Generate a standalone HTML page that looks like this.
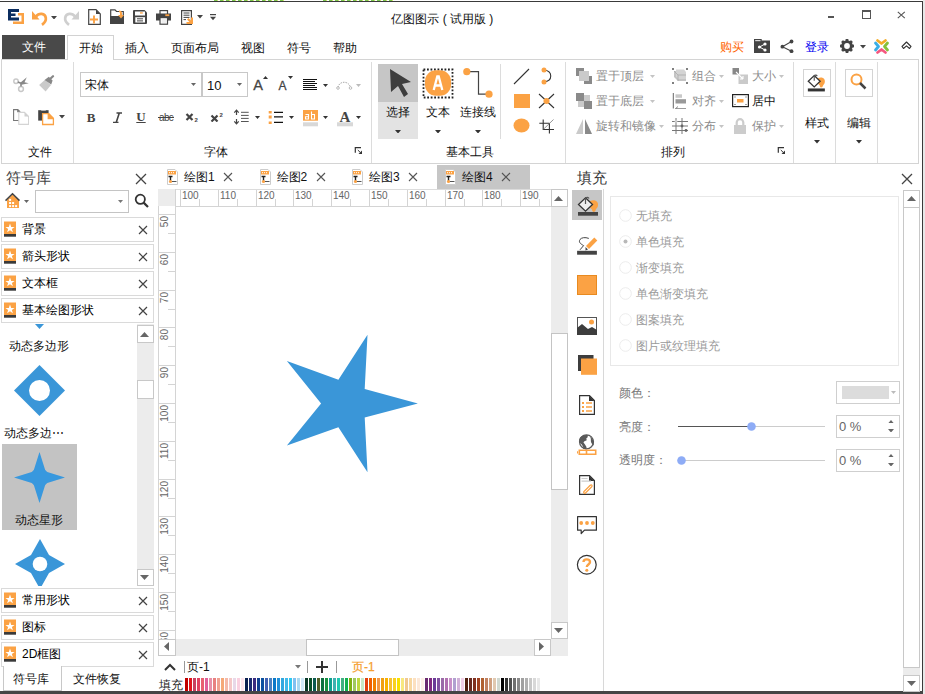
<!DOCTYPE html><html><head><meta charset="utf-8"><style>body{margin:0;width:925px;height:694px;position:relative;overflow:hidden;background:#fff;font-family:"Liberation Sans",sans-serif;}div,svg{box-sizing:border-box}</style></head><body>
<div style="position:absolute;left:0px;top:1px;width:923px;height:1px;background:#3a3a3a"></div>
<div style="position:absolute;left:214px;top:0px;width:70px;height:1px;background:repeating-linear-gradient(90deg,#7cc850 0 3px,#d8e070 3px 4px,#fff 4px 6px)"></div>
<div style="position:absolute;left:323px;top:0px;width:72px;height:1px;background:repeating-linear-gradient(90deg,#7cc850 0 3px,#d8e070 3px 4px,#fff 4px 6px)"></div>
<div style="position:absolute;left:922px;top:1px;width:1px;height:691px;background:#3a3a3a"></div>
<div style="position:absolute;left:0px;top:691px;width:923px;height:3px;background:#454545"></div>
<svg style="position:absolute;left:8px;top:9px;" width="17" height="16" viewBox="0 0 17 16"><path d="M0 0H11V3H3V4.5H7.5V7H3V8.5H11V11.5H0Z" fill="#0b2d5f"/><path d="M10 4H16V15H5V12.5H13.5V6.5H10Z" fill="#fba244"/></svg>
<svg style="position:absolute;left:31px;top:9px;" width="17" height="17" viewBox="0 0 17 17"><path d="M1 2L1 10.5H8.5Z" fill="#fba244"/><path d="M5 7.5C8 3.5 14 4 14.8 8.8C15.3 12 13.5 14 11 15.8" stroke="#fba244" stroke-width="2.7" fill="none"/></svg>
<svg style="position:absolute;left:50.5px;top:15.75px;" width="6" height="3.5" viewBox="0 0 6 3.5"><path d="M0 0H6L3.0 3.5Z" fill="#444"/></svg>
<svg style="position:absolute;left:63px;top:9px;" width="17" height="17" viewBox="0 0 17 17"><path d="M16 2L16 10.5H8.5Z" fill="#cfcfcf"/><path d="M12 7.5C9 3.5 3 4 2.2 8.8C1.7 12 3.5 14 6 15.8" stroke="#cfcfcf" stroke-width="2.7" fill="none"/></svg>
<svg style="position:absolute;left:88px;top:9px;" width="13" height="16" viewBox="0 0 13 16"><path d="M0.7 0.7H8L12.3 5V15.3H0.7Z" fill="#fff" stroke="#444" stroke-width="1.2"/><path d="M8 0.7V5H12.3Z" fill="#444"/><path d="M6 6.5V14.5M2 10.5H10" stroke="#fba244" stroke-width="1.9"/></svg>
<svg style="position:absolute;left:110px;top:9px;" width="15" height="15" viewBox="0 0 15 15"><path d="M0.7 0.9H5L6.5 2.5H13.3V14.3H0.7Z" fill="#fff" stroke="#444" stroke-width="1.2"/><rect x="0" y="7" width="14" height="8" fill="#444"/><path d="M9 1.5C11 1.5 12 2.5 12 4.5V6H14L11 9.5L8 6H10V4.5C10 3.5 9.5 3 9 3Z" fill="#fba244"/></svg>
<svg style="position:absolute;left:133px;top:10px;" width="14" height="14" viewBox="0 0 14 14"><path d="M0 1A1 1 0 0 1 1 0H11.5L14 2.5V13A1 1 0 0 1 13 14H1A1 1 0 0 1 0 13Z" fill="#444"/><rect x="2" y="1.5" width="10" height="4" fill="#fff"/><rect x="7" y="2.3" width="2.8" height="1.3" fill="#fba244"/><rect x="2.3" y="7.2" width="9.7" height="5.3" fill="#fff"/><path d="M4 8.8H10M4 10.9H10" stroke="#444"/></svg>
<svg style="position:absolute;left:155.5px;top:10px;" width="15" height="15" viewBox="0 0 15 15"><rect x="4" y="0.6" width="7.5" height="4" fill="#fff" stroke="#444" stroke-width="1.2"/><rect x="0" y="3.5" width="15" height="7" fill="#444"/><rect x="9.3" y="4.3" width="4" height="1.8" fill="#fba244"/><rect x="4" y="7.6" width="7.5" height="6.6" fill="#fff" stroke="#444" stroke-width="1.2"/><path d="M5.5 10H10M5.5 12H10" stroke="#ddd"/></svg>
<svg style="position:absolute;left:181px;top:10px;" width="12" height="15" viewBox="0 0 12 15"><path d="M0.6 0.6H10.4V14.4H0.6Z" fill="#fff" stroke="#444" stroke-width="1.2"/><path d="M2.5 3H8.5M2.5 5.2H8.5M2.5 7.4H8.5M2.5 9.6H5" stroke="#444" stroke-width="1"/><path d="M6 9.5L7.5 8L10 10.5V7.5H12V14H5.5V12H8.5Z" fill="#fba244"/></svg>
<svg style="position:absolute;left:197.0px;top:15.25px;" width="6" height="3.5" viewBox="0 0 6 3.5"><path d="M0 0H6L3.0 3.5Z" fill="#444"/></svg>
<svg style="position:absolute;left:210px;top:14px;" width="6" height="7" viewBox="0 0 6 7"><rect x="0" y="0" width="6" height="1.2" fill="#444"/><path d="M0 2.8H6L3 6.3Z" fill="#444"/></svg>
<div style="position:absolute;left:342.3px;top:10.5px;width:200px;text-align:center;font-size:12px;line-height:16px;color:#111;white-space:nowrap;">亿图图示 ( 试用版 )</div>
<div style="position:absolute;left:828px;top:16px;width:6px;height:2px;background:#555"></div>
<div style="position:absolute;left:862px;top:10px;width:9px;height:9px;border:1px solid #555;border-top:2px solid #555"></div>
<svg style="position:absolute;left:896.5px;top:10.5px;" width="9" height="8" viewBox="0 0 9 8"><path d="M0.8 0.8L7.8 7.2M7.8 0.8L0.8 7.2" stroke="#555" stroke-width="1.1"/></svg>
<div style="position:absolute;left:2px;top:35px;width:63px;height:24px;background:#494949"></div>
<div style="position:absolute;left:-66.5px;top:39.0px;width:200px;text-align:center;font-size:12px;line-height:16px;color:#fff;white-space:nowrap;">文件</div>
<div style="position:absolute;left:67px;top:35px;width:47px;height:25px;background:#fff;border:1px solid #d2d2d2;border-bottom:none;z-index:2"></div>
<div style="position:absolute;left:-9.5px;top:39.5px;width:200px;text-align:center;font-size:12px;line-height:16px;color:#111;white-space:nowrap;z-index:3">开始</div>
<div style="position:absolute;left:37px;top:39.5px;width:200px;text-align:center;font-size:12px;line-height:16px;color:#111;white-space:nowrap;">插入</div>
<div style="position:absolute;left:94.5px;top:39.5px;width:200px;text-align:center;font-size:12px;line-height:16px;color:#111;white-space:nowrap;">页面布局</div>
<div style="position:absolute;left:152.5px;top:39.5px;width:200px;text-align:center;font-size:12px;line-height:16px;color:#111;white-space:nowrap;">视图</div>
<div style="position:absolute;left:198.5px;top:39.5px;width:200px;text-align:center;font-size:12px;line-height:16px;color:#111;white-space:nowrap;">符号</div>
<div style="position:absolute;left:244.60000000000002px;top:39.5px;width:200px;text-align:center;font-size:12px;line-height:16px;color:#111;white-space:nowrap;">帮助</div>
<div style="position:absolute;left:632px;top:38.5px;width:200px;text-align:center;font-size:12px;line-height:16px;color:#ff6400;white-space:nowrap;">购买</div>
<svg style="position:absolute;left:754px;top:39px;" width="16" height="14" viewBox="0 0 16 14"><rect x="0" y="1.5" width="16" height="12.5" fill="#444"/><rect x="0.6" y="0.6" width="6.5" height="2.2" fill="#fff" stroke="#444" stroke-width="1.2"/><circle cx="11" cy="5" r="1.6" fill="#fff"/><circle cx="5.5" cy="8" r="1.6" fill="#fff"/><circle cx="11" cy="11" r="1.6" fill="#fff"/><path d="M11 5L5.5 8L11 11" stroke="#fff" fill="none"/></svg>
<svg style="position:absolute;left:780px;top:39px;" width="14" height="14" viewBox="0 0 14 14"><circle cx="11.5" cy="2.5" r="1.9" fill="#444"/><circle cx="2.4" cy="7.7" r="1.9" fill="#444"/><circle cx="11.5" cy="12.2" r="1.9" fill="#444"/><path d="M11.5 2.5L2.4 7.7L11.5 12.2" stroke="#444" stroke-width="1.1" fill="none"/></svg>
<div style="position:absolute;left:717px;top:38.5px;width:200px;text-align:center;font-size:12px;line-height:16px;color:#0000f0;white-space:nowrap;">登录</div>
<svg style="position:absolute;left:839px;top:38px;" width="16" height="16" viewBox="0 0 16 16"><g fill="#444"><circle cx="8" cy="8" r="5.8"/><rect x="6.6" y="1" width="2.8" height="3" rx="0.6" transform="rotate(0 8 8)"/><rect x="6.6" y="1" width="2.8" height="3" rx="0.6" transform="rotate(45 8 8)"/><rect x="6.6" y="1" width="2.8" height="3" rx="0.6" transform="rotate(90 8 8)"/><rect x="6.6" y="1" width="2.8" height="3" rx="0.6" transform="rotate(135 8 8)"/><rect x="6.6" y="1" width="2.8" height="3" rx="0.6" transform="rotate(180 8 8)"/><rect x="6.6" y="1" width="2.8" height="3" rx="0.6" transform="rotate(225 8 8)"/><rect x="6.6" y="1" width="2.8" height="3" rx="0.6" transform="rotate(270 8 8)"/><rect x="6.6" y="1" width="2.8" height="3" rx="0.6" transform="rotate(315 8 8)"/></g><circle cx="8" cy="8" r="2.9" fill="#fff"/></svg>
<svg style="position:absolute;left:859.5px;top:45.25px;" width="6" height="3.5" viewBox="0 0 6 3.5"><path d="M0 0H6L3.0 3.5Z" fill="#444"/></svg>
<svg style="position:absolute;left:873px;top:38px;" width="17" height="17" viewBox="0 0 17 17"><g fill="none" stroke-width="2.8" stroke-linecap="round" stroke-linejoin="round"><path d="M4.5 2.5L8.5 5.5L12.5 2.5" stroke="#f4ac27"/><path d="M2.5 5L5.5 8.5L2.5 12" stroke="#3aaee6"/><path d="M14.5 5L11.5 8.5L14.5 12" stroke="#86c13b"/><path d="M4.5 14.5L8.5 11.5L12.5 14.5" stroke="#f4577f"/></g></svg>
<svg style="position:absolute;left:901px;top:41px;" width="11" height="9" viewBox="0 0 11 9"><path d="M1 5.5L5.5 1L10 5.5L8.5 7.5L5.5 4.8L2.5 7.5Z" fill="#fff" stroke="#333" stroke-width="1.1" stroke-linejoin="round"/></svg>
<div style="position:absolute;left:1px;top:59px;width:918px;height:105px;border:1px solid #d4d4d4;background:#fff;z-index:1"></div>
<div style="position:absolute;left:0;top:0;width:925px;height:694px;z-index:4">
<div style="position:absolute;left:73px;top:62px;width:1px;height:101px;background:#dcdcdc"></div>
<div style="position:absolute;left:371px;top:62px;width:1px;height:101px;background:#dcdcdc"></div>
<div style="position:absolute;left:565px;top:62px;width:1px;height:101px;background:#dcdcdc"></div>
<div style="position:absolute;left:793px;top:62px;width:1px;height:101px;background:#dcdcdc"></div>
<div style="position:absolute;left:835px;top:62px;width:1px;height:101px;background:#dcdcdc"></div>
<div style="position:absolute;left:877px;top:62px;width:1px;height:101px;background:#dcdcdc"></div>
<div style="position:absolute;left:-60px;top:143.5px;width:200px;text-align:center;font-size:12px;line-height:16px;color:#111;white-space:nowrap;">文件</div>
<div style="position:absolute;left:116px;top:143.5px;width:200px;text-align:center;font-size:12px;line-height:16px;color:#111;white-space:nowrap;">字体</div>
<div style="position:absolute;left:370px;top:143.5px;width:200px;text-align:center;font-size:12px;line-height:16px;color:#111;white-space:nowrap;">基本工具</div>
<div style="position:absolute;left:573px;top:143.5px;width:200px;text-align:center;font-size:12px;line-height:16px;color:#111;white-space:nowrap;">排列</div>
<svg style="position:absolute;left:354px;top:146px;" width="9" height="9" viewBox="0 0 9 9"><path d="M1.3 6.8V1.7H7" stroke="#333" stroke-width="1.2" fill="none"/><path d="M3.8 4L6.5 6.7" stroke="#333" stroke-width="1"/><path d="M8 4.5V8H4.5Z" fill="#333"/></svg>
<svg style="position:absolute;left:777px;top:146px;" width="9" height="9" viewBox="0 0 9 9"><path d="M1.3 6.8V1.7H7" stroke="#333" stroke-width="1.2" fill="none"/><path d="M3.8 4L6.5 6.7" stroke="#333" stroke-width="1"/><path d="M8 4.5V8H4.5Z" fill="#333"/></svg>
<svg style="position:absolute;left:12px;top:75px;" width="18" height="18" viewBox="0 0 18 18"><circle cx="4" cy="6.2" r="2.2" fill="none" stroke="#c8c8c8" stroke-width="1.5"/><circle cx="9" cy="14" r="2.4" fill="none" stroke="#c8c8c8" stroke-width="1.5"/><path d="M5.8 7L9 8.3L9 11.6" stroke="#888" stroke-width="1.6" fill="none"/><path d="M8 8L14.8 2.2L12.5 7.2L16.8 8.2L9.5 9.8Z" fill="#888"/></svg>
<svg style="position:absolute;left:38px;top:75px;" width="18" height="18" viewBox="0 0 18 18"><path d="M1.1 10.1L7 4.8L13 9.9L7.6 16.6Z" fill="#cacaca"/><path d="M6.6 5L10.8 1.8L14.6 5.6L13.2 9.6Z" fill="#888"/><path d="M11.5 4.5L15 1.2" stroke="#888" stroke-width="2.2" stroke-linecap="round"/></svg>
<svg style="position:absolute;left:13px;top:109px;" width="16" height="16" viewBox="0 0 16 16"><path d="M0.6 0.6H4.8L6.8 2.6V11.5H0.6Z" fill="#fff" stroke="#777" stroke-width="1.1"/><path d="M4.2 0.3L7.2 3.2H4.2Z" fill="#777"/><path d="M5.8 3.4H11.5L15.6 7.5V15.4H5.8Z" fill="#fff" stroke="#d4d4d4" stroke-width="1.1"/><path d="M11.5 3.4L15.6 7.5H11.5Z" fill="#d0d0d0"/></svg>
<svg style="position:absolute;left:38px;top:109px;" width="17" height="17" viewBox="0 0 17 17"><rect x="0.2" y="1.2" width="10.4" height="10.4" fill="#444"/><rect x="3.2" y="0" width="4.6" height="1.5" fill="#fff"/><path d="M4.6 4.7H10.7L15.4 9.4V15.5H4.6Z" fill="#fff" stroke="#fba244" stroke-width="1.3"/><path d="M9.6 4.2H11L15.9 9.1V10.2H9.6Z" fill="#fba244"/></svg>
<svg style="position:absolute;left:58.5px;top:115.25px;" width="6" height="3.5" viewBox="0 0 6 3.5"><path d="M0 0H6L3.0 3.5Z" fill="#444"/></svg>
<div style="position:absolute;left:80px;top:72px;width:122px;height:25px;border:1px solid #c8c8c8;background:#fff"></div>
<div style="position:absolute;left:85px;top:77px;font-size:12px;line-height:16px;color:#111;white-space:nowrap;">宋体</div>
<svg style="position:absolute;left:190.5px;top:83.0px;" width="5" height="3.0" viewBox="0 0 5 3.0"><path d="M0 0H5L2.5 3.0Z" fill="#666"/></svg>
<div style="position:absolute;left:202px;top:72px;width:46px;height:25px;border:1px solid #c8c8c8;background:#fff"></div>
<div style="position:absolute;left:207px;top:77px;font-size:13px;line-height:17px;color:#111;white-space:nowrap;">10</div>
<svg style="position:absolute;left:236.5px;top:83.0px;" width="5" height="3.0" viewBox="0 0 5 3.0"><path d="M0 0H5L2.5 3.0Z" fill="#666"/></svg>
<div style="position:absolute;left:158px;top:75.75px;width:200px;text-align:center;font-size:14.5px;line-height:18.5px;color:#444;white-space:nowrap;-webkit-text-stroke:0.3px #444">A</div>
<svg style="position:absolute;left:263.0px;top:75.5px;" width="5" height="3.0" viewBox="0 0 5 3.0"><path d="M0 3.0H5L2.5 0Z" fill="#333"/></svg>
<div style="position:absolute;left:182.5px;top:78.0px;width:200px;text-align:center;font-size:12px;line-height:16px;color:#444;white-space:nowrap;-webkit-text-stroke:0.3px #444">A</div>
<svg style="position:absolute;left:287.5px;top:76.0px;" width="5" height="3.0" viewBox="0 0 5 3.0"><path d="M0 0H5L2.5 3.0Z" fill="#333"/></svg>
<svg style="position:absolute;left:303px;top:79px;" width="14" height="11" viewBox="0 0 14 11"><path d="M0 0.5H14M0 2.5H12M0 4.5H14M0 6.5H12M0 8.5H14M0 10.5H14" stroke="#111" stroke-width="1"/></svg>
<svg style="position:absolute;left:323.0px;top:83.5px;" width="5" height="3.0" viewBox="0 0 5 3.0"><path d="M0 0H5L2.5 3.0Z" fill="#333"/></svg>
<svg style="position:absolute;left:336px;top:79px;" width="17" height="11" viewBox="0 0 17 11"><path d="M2 8.5C3 1.5 13 1.5 14.5 8.5" stroke="#aaa" fill="none" stroke-dasharray="1.5 1"/><circle cx="2" cy="9" r="1.3" fill="#fff" stroke="#aaa" stroke-width="0.8"/><circle cx="14.5" cy="9" r="1.3" fill="#fff" stroke="#aaa" stroke-width="0.8"/></svg>
<svg style="position:absolute;left:355.5px;top:83.5px;" width="5" height="3.0" viewBox="0 0 5 3.0"><path d="M0 0H5L2.5 3.0Z" fill="#bbb"/></svg>
<div style="position:absolute;left:-9px;top:108.5px;width:200px;text-align:center;font-size:13px;line-height:17px;color:#444;white-space:nowrap;font-weight:bold;font-family:Liberation Serif">B</div>
<svg style="position:absolute;left:112px;top:112px;" width="10" height="11" viewBox="0 0 10 11"><path d="M4.5 1H10M1 10.5H6.5M7.3 1L4.2 10.5" stroke="#444" stroke-width="1.6"/></svg>
<div style="position:absolute;left:41px;top:107.5px;width:200px;text-align:center;font-size:13px;line-height:17px;color:#444;white-space:nowrap;font-weight:bold;font-family:Liberation Serif;text-decoration:underline">U</div>
<div style="position:absolute;left:66px;top:110.0px;width:200px;text-align:center;font-size:11px;line-height:15px;color:#444;white-space:nowrap;letter-spacing:-0.8px;transform:scaleX(0.9)">abc</div>
<div style="position:absolute;left:158px;top:117px;width:16px;height:1px;background:#444"></div>
<svg style="position:absolute;left:185px;top:113px;" width="14" height="9" viewBox="0 0 14 9"><path d="M1.5 1L7.5 7M7.5 1L1.5 7" stroke="#444" stroke-width="2.2"/><text x="9.5" y="8.5" font-size="6" font-weight="bold" fill="#444" font-family="Liberation Sans">2</text></svg>
<svg style="position:absolute;left:210px;top:112px;" width="14" height="10" viewBox="0 0 14 10"><path d="M1.5 3.5L7.5 9.5M7.5 3.5L1.5 9.5" stroke="#444" stroke-width="2.2"/><text x="9.5" y="4.5" font-size="6" font-weight="bold" fill="#444" font-family="Liberation Sans">2</text></svg>
<svg style="position:absolute;left:233px;top:109px;" width="16" height="16" viewBox="0 0 16 16"><path d="M3.5 1.5V6M1.3 3.7L3.5 1.2L5.7 3.7M3.5 10V14.5M1.3 12.3L3.5 14.8L5.7 12.3" stroke="#444" fill="none" stroke-width="1.2"/><path d="M8 3.3H15.7M8 6.4H15.7M8 9.4H15.7M8 12.5H15.7" stroke="#555" stroke-width="1"/></svg>
<svg style="position:absolute;left:254.5px;top:115.5px;" width="5" height="3.0" viewBox="0 0 5 3.0"><path d="M0 0H5L2.5 3.0Z" fill="#333"/></svg>
<svg style="position:absolute;left:268px;top:111px;" width="16" height="13" viewBox="0 0 16 13"><rect x="0.7" y="0" width="3" height="2.5" fill="#fba244"/><rect x="0.7" y="4.5" width="3" height="3" fill="#fba244"/><rect x="0.7" y="10.5" width="3" height="2.5" fill="#fba244"/><path d="M6 1.3H15M6 5.9H15M6 11.3H15" stroke="#111" stroke-width="1.2"/></svg>
<svg style="position:absolute;left:288.5px;top:115.5px;" width="5" height="3.0" viewBox="0 0 5 3.0"><path d="M0 0H5L2.5 3.0Z" fill="#333"/></svg>
<svg style="position:absolute;left:303px;top:110px;" width="15" height="17" viewBox="0 0 15 17"><rect x="0" y="0" width="15" height="10.7" fill="#fba244"/><path d="M2.5 4.5H5.5V9H2.5V6.7H5.5M8.5 1.5V9H11.5V4.5H8.5" stroke="#fff" stroke-width="1.1" fill="none"/><rect x="0" y="12.3" width="15" height="4" fill="#d8d8d8"/></svg>
<svg style="position:absolute;left:322.5px;top:115.5px;" width="5" height="3.0" viewBox="0 0 5 3.0"><path d="M0 0H5L2.5 3.0Z" fill="#333"/></svg>
<svg style="position:absolute;left:337px;top:109px;" width="16" height="18" viewBox="0 0 16 18"><text x="7.8" y="12.5" font-size="15" fill="#444" text-anchor="middle" font-family="Liberation Serif" font-weight="bold">A</text><rect x="0" y="13.3" width="16" height="4" fill="#d8d8d8"/></svg>
<svg style="position:absolute;left:356.0px;top:115.5px;" width="5" height="3.0" viewBox="0 0 5 3.0"><path d="M0 0H5L2.5 3.0Z" fill="#333"/></svg>
<div style="position:absolute;left:378px;top:64px;width:40px;height:38px;background:#c6c6c6"></div>
<div style="position:absolute;left:378px;top:102px;width:40px;height:37px;background:#e3e3e3"></div>
<svg style="position:absolute;left:390px;top:69px;" width="21" height="28" viewBox="0 0 21 28"><path d="M0 0L21 13L12 15L18 25L14 28L8 17L1 23Z" fill="#3d3d3d"/></svg>
<div style="position:absolute;left:298px;top:104.0px;width:200px;text-align:center;font-size:12px;line-height:16px;color:#111;white-space:nowrap;">选择</div>
<svg style="position:absolute;left:395.0px;top:129.75px;" width="6" height="3.5" viewBox="0 0 6 3.5"><path d="M0 0H6L3.0 3.5Z" fill="#333"/></svg>
<svg style="position:absolute;left:422px;top:68px;" width="32" height="31" viewBox="0 0 32 31"><rect x="1.5" y="1.5" width="29" height="28" fill="none" stroke="#222" stroke-width="1.8" stroke-dasharray="1.8 1.7"/><rect x="3" y="2.3" width="26" height="25.5" rx="11" fill="#fba244"/><path d="M11.7 22L15.3 8.5H16.7L20.3 22M13 17.5H19" stroke="#fff" stroke-width="2.3" fill="none"/></svg>
<div style="position:absolute;left:338px;top:104.0px;width:200px;text-align:center;font-size:12px;line-height:16px;color:#111;white-space:nowrap;">文本</div>
<svg style="position:absolute;left:435.0px;top:129.75px;" width="6" height="3.5" viewBox="0 0 6 3.5"><path d="M0 0H6L3.0 3.5Z" fill="#333"/></svg>
<svg style="position:absolute;left:463px;top:66px;" width="31" height="32" viewBox="0 0 31 32"><path d="M4 5.7H15.5V28.2H26" stroke="#444" stroke-width="1.2" fill="none"/><circle cx="3.8" cy="5.7" r="3.6" fill="#fba244"/><circle cx="26" cy="28.2" r="3.6" fill="#fba244"/></svg>
<div style="position:absolute;left:378px;top:104.0px;width:200px;text-align:center;font-size:12px;line-height:16px;color:#111;white-space:nowrap;">连接线</div>
<svg style="position:absolute;left:475.0px;top:129.75px;" width="6" height="3.5" viewBox="0 0 6 3.5"><path d="M0 0H6L3.0 3.5Z" fill="#333"/></svg>
<div style="position:absolute;left:500px;top:64px;width:1px;height:75px;background:#dcdcdc"></div>
<svg style="position:absolute;left:513px;top:68px;" width="17" height="17" viewBox="0 0 17 17"><path d="M1 16L16 1" stroke="#333" stroke-width="1.1"/></svg>
<svg style="position:absolute;left:541px;top:67px;" width="12" height="18" viewBox="0 0 12 18"><path d="M3 3C12 4 12 14 3 15" stroke="#333" fill="none" stroke-width="1.1"/><circle cx="3" cy="3" r="2.5" fill="#fba244"/><circle cx="3" cy="15" r="2.5" fill="#fba244"/></svg>
<div style="position:absolute;left:514px;top:94px;width:16px;height:14px;background:#fba244"></div>
<svg style="position:absolute;left:538px;top:93px;" width="17" height="16" viewBox="0 0 17 16"><path d="M1 1L16 15M16 1L1 15" stroke="#333" stroke-width="1.1"/><circle cx="8.5" cy="8" r="3" fill="#fba244"/></svg>
<svg style="position:absolute;left:513px;top:118px;" width="17" height="15" viewBox="0 0 17 15"><ellipse cx="8.5" cy="7.5" rx="8" ry="7" fill="#fba244"/></svg>
<svg style="position:absolute;left:538px;top:118px;" width="17" height="17" viewBox="0 0 17 17"><path d="M1.3 5.3H11.4M5.2 1.4V11.5H16M11.4 5.3V15.4" stroke="#333" stroke-width="1.1" fill="none"/><path d="M5.2 11.5L15.5 1.5" stroke="#666" stroke-width="0.7"/></svg>
<svg style="position:absolute;left:576px;top:68px;" width="16" height="16" viewBox="0 0 16 16"><rect x="0" y="0" width="8" height="8" fill="#8a8a8a"/><rect x="8" y="8" width="8" height="8" fill="#8a8a8a"/><rect x="3" y="3" width="10" height="10" fill="#cacaca"/></svg>
<div style="position:absolute;left:596px;top:68px;font-size:12px;line-height:16px;color:#8c8c8c;white-space:nowrap;">置于顶层</div>
<svg style="position:absolute;left:649.5px;top:75.0px;" width="5" height="3.0" viewBox="0 0 5 3.0"><path d="M0 0H5L2.5 3.0Z" fill="#c4c4c4"/></svg>
<svg style="position:absolute;left:576px;top:93px;" width="16" height="16" viewBox="0 0 16 16"><rect x="8" y="2" width="6" height="6" fill="#cacaca"/><rect x="2" y="8" width="6" height="6" fill="#cacaca"/><rect x="0" y="0" width="8" height="8" fill="#8a8a8a"/><rect x="8" y="8" width="8" height="8" fill="#8a8a8a"/></svg>
<div style="position:absolute;left:596px;top:93px;font-size:12px;line-height:16px;color:#8c8c8c;white-space:nowrap;">置于底层</div>
<svg style="position:absolute;left:649.5px;top:100.0px;" width="5" height="3.0" viewBox="0 0 5 3.0"><path d="M0 0H5L2.5 3.0Z" fill="#c4c4c4"/></svg>
<svg style="position:absolute;left:576px;top:119px;" width="16" height="15" viewBox="0 0 16 15"><path d="M7 0V15H0Z" fill="#cacaca"/><path d="M9 0V15H16Z" fill="#8a8a8a"/></svg>
<div style="position:absolute;left:596px;top:118px;font-size:12px;line-height:16px;color:#8c8c8c;white-space:nowrap;">旋转和镜像</div>
<svg style="position:absolute;left:658.5px;top:125.0px;" width="5" height="3.0" viewBox="0 0 5 3.0"><path d="M0 0H5L2.5 3.0Z" fill="#c4c4c4"/></svg>
<svg style="position:absolute;left:672px;top:68px;" width="16" height="16" viewBox="0 0 16 16"><path d="M2 3L10 3L14 7V13L6 13L2 9Z" fill="#c4c4c4"/><path d="M4 1.5L12 1.5L14 4V11L6 11L4 8.5Z" fill="#d4d4d4"/><path d="M2 3L6 7V13M6 7H14" stroke="#aaa" fill="none" stroke-width="0.8"/><circle cx="1" cy="1" r="1" fill="#555"/><circle cx="15" cy="1" r="1" fill="#555"/><circle cx="1" cy="15" r="1" fill="#555"/><circle cx="15" cy="15" r="1" fill="#555"/></svg>
<div style="position:absolute;left:692px;top:68px;font-size:12px;line-height:16px;color:#8c8c8c;white-space:nowrap;">组合</div>
<svg style="position:absolute;left:719.0px;top:75.0px;" width="5" height="3.0" viewBox="0 0 5 3.0"><path d="M0 0H5L2.5 3.0Z" fill="#c4c4c4"/></svg>
<svg style="position:absolute;left:672px;top:93px;" width="15" height="16" viewBox="0 0 15 16"><path d="M1.3 0V15.5" stroke="#666" stroke-width="1"/><rect x="3.5" y="1.3" width="6.5" height="3.5" fill="#c8c8c8"/><rect x="3.5" y="6.2" width="10.5" height="4.3" fill="#999"/><path d="M3.5 15.7H14M3.5 15.7L6 13.5M3.5 15.7L6 17.5" stroke="#777" stroke-width="0.9" fill="none"/></svg>
<div style="position:absolute;left:692px;top:93px;font-size:12px;line-height:16px;color:#8c8c8c;white-space:nowrap;">对齐</div>
<svg style="position:absolute;left:719.0px;top:100.0px;" width="5" height="3.0" viewBox="0 0 5 3.0"><path d="M0 0H5L2.5 3.0Z" fill="#c4c4c4"/></svg>
<svg style="position:absolute;left:672px;top:118px;" width="16" height="16" viewBox="0 0 16 16"><path d="M4 0V16M10 0V16M0 3.5H16M0 8H16M0 12.5H16" stroke="#777" stroke-width="1"/><circle cx="4" cy="3.5" r="1.4" fill="#ccc"/><circle cx="10" cy="8" r="1.4" fill="#666"/><circle cx="14" cy="12.5" r="1.4" fill="#666"/></svg>
<div style="position:absolute;left:692px;top:118px;font-size:12px;line-height:16px;color:#8c8c8c;white-space:nowrap;">分布</div>
<svg style="position:absolute;left:719.0px;top:125.0px;" width="5" height="3.0" viewBox="0 0 5 3.0"><path d="M0 0H5L2.5 3.0Z" fill="#c4c4c4"/></svg>
<svg style="position:absolute;left:732px;top:68px;" width="17" height="16" viewBox="0 0 17 16"><rect x="0.5" y="0" width="6.5" height="6.5" fill="#888"/><rect x="6.5" y="6.5" width="9.5" height="9.5" fill="#cacaca"/><path d="M4 4L11 11M11 11V8M11 11H8" stroke="#fff" stroke-width="1.1" fill="none"/></svg>
<div style="position:absolute;left:752px;top:68px;font-size:12px;line-height:16px;color:#8c8c8c;white-space:nowrap;">大小</div>
<svg style="position:absolute;left:778.5px;top:75.0px;" width="5" height="3.0" viewBox="0 0 5 3.0"><path d="M0 0H5L2.5 3.0Z" fill="#c4c4c4"/></svg>
<svg style="position:absolute;left:732px;top:94px;" width="17" height="14" viewBox="0 0 17 14"><rect x="0.6" y="0.6" width="15.8" height="12" fill="#fff" stroke="#222" stroke-width="1.2"/><rect x="5" y="5" width="6.5" height="3.5" fill="#fba244"/><g fill="#444"><rect x="2.5" y="2.5" width="1" height="1"/><rect x="13.5" y="2.5" width="1" height="1"/><rect x="2.5" y="10" width="1" height="1"/><rect x="13.5" y="10" width="1" height="1"/></g></svg>
<div style="position:absolute;left:752px;top:93px;font-size:12px;line-height:16px;color:#111;white-space:nowrap;">居中</div>
<svg style="position:absolute;left:734px;top:118px;" width="12" height="16" viewBox="0 0 12 16"><path d="M2.7 7V4.5A3.3 3.3 0 0 1 9.3 4.5V7" stroke="#ccc" stroke-width="2.2" fill="none"/><rect x="0" y="7" width="12" height="9" fill="#ccc"/></svg>
<div style="position:absolute;left:752px;top:118px;font-size:12px;line-height:16px;color:#8c8c8c;white-space:nowrap;">保护</div>
<svg style="position:absolute;left:778.5px;top:125.0px;" width="5" height="3.0" viewBox="0 0 5 3.0"><path d="M0 0H5L2.5 3.0Z" fill="#c4c4c4"/></svg>
<div style="position:absolute;left:803px;top:69px;width:28px;height:28px;border:1px solid #d4d4d4"></div>
<svg style="position:absolute;left:807px;top:74px;" width="19" height="19" viewBox="0 0 19 19"><g transform="scale(0.85)"><path d="M13 5C17 3 21.5 5 21 9C21 12 19 12 18.5 14.5C18 16.5 15 16.5 15 13.5L12.5 11Z" fill="#fba244"/><path d="M8.5 1.8L15.5 8.5L8.5 15.2L1.5 8.5Z" fill="#fff" stroke="#333" stroke-width="1.5"/><path d="M8.5 8V3A1.8 1.8 0 0 1 12 2.5" stroke="#555" stroke-width="1.3" fill="none"/><rect x="1" y="17" width="20" height="3.5" fill="#333"/></g></svg>
<div style="position:absolute;left:716.5px;top:114.5px;width:200px;text-align:center;font-size:12px;line-height:16px;color:#111;white-space:nowrap;">样式</div>
<svg style="position:absolute;left:813.5px;top:140.25px;" width="6" height="3.5" viewBox="0 0 6 3.5"><path d="M0 0H6L3.0 3.5Z" fill="#333"/></svg>
<div style="position:absolute;left:845px;top:69px;width:28px;height:28px;border:1px solid #d4d4d4"></div>
<svg style="position:absolute;left:850px;top:73px;" width="17" height="17" viewBox="0 0 17 17"><circle cx="6.5" cy="6.5" r="5" fill="none" stroke="#fba244" stroke-width="2"/><path d="M10 10L15.5 15.5" stroke="#444" stroke-width="2.5"/></svg>
<div style="position:absolute;left:758.5px;top:114.5px;width:200px;text-align:center;font-size:12px;line-height:16px;color:#111;white-space:nowrap;">编辑</div>
<svg style="position:absolute;left:855.5px;top:140.25px;" width="6" height="3.5" viewBox="0 0 6 3.5"><path d="M0 0H6L3.0 3.5Z" fill="#333"/></svg>
</div>
<div style="position:absolute;left:6px;top:168px;font-size:15px;line-height:19px;color:#444;white-space:nowrap;">符号库</div>
<svg style="position:absolute;left:135.0px;top:173.0px;" width="12" height="12" viewBox="0 0 12 12"><path d="M1 1L11 11M11 1L1 11" stroke="#444" stroke-width="1.3"/></svg>
<svg style="position:absolute;left:5px;top:192px;" width="16" height="17" viewBox="0 0 16 17"><path d="M7.5 2.5L14 8V16H2V8Z" fill="#fba244"/><path d="M0.5 8.6L7.5 1.8L14.5 8.6" stroke="#444" stroke-width="1.5" fill="none"/><g fill="#fff"><rect x="4.1" y="6.9" width="2" height="2"/><rect x="4.1" y="10" width="2" height="2"/><rect x="7.1" y="10" width="2" height="2"/><rect x="4.1" y="13.1" width="2" height="2"/><rect x="7.1" y="13.1" width="2" height="2"/><rect x="10.1" y="13.1" width="2" height="2"/></g></svg>
<svg style="position:absolute;left:23.9px;top:199.5px;" width="5" height="3.0" viewBox="0 0 5 3.0"><path d="M0 0H5L2.5 3.0Z" fill="#666"/></svg>
<div style="position:absolute;left:35px;top:190px;width:94px;height:23px;border:1px solid #c4c4c4"></div>
<svg style="position:absolute;left:117.5px;top:200.0px;" width="5" height="3.0" viewBox="0 0 5 3.0"><path d="M0 0H5L2.5 3.0Z" fill="#777"/></svg>
<svg style="position:absolute;left:134px;top:193px;" width="16" height="16" viewBox="0 0 16 16"><circle cx="6.3" cy="6.3" r="4.6" fill="none" stroke="#333" stroke-width="1.8"/><path d="M9.6 9.6L14 14" stroke="#333" stroke-width="2.2"/></svg>
<div style="position:absolute;left:1px;top:217px;width:153px;height:25px;border:1px solid #dadada;background:#fff"></div><svg style="position:absolute;left:4px;top:221px;" width="12" height="16" viewBox="0 0 12 16"><rect x="0" y="0.5" width="12" height="12.5" fill="#fba244"/><rect x="0" y="13" width="12" height="2.7" fill="#3a3a3a"/><path d="M6 2.6L7.2 5.9H10.6L7.9 7.9L8.9 11.2L6 9.2L3.1 11.2L4.1 7.9L1.4 5.9H4.8Z" fill="#fff"/></svg><div style="position:absolute;left:22px;top:221px;font-size:12px;line-height:16px;color:#000;white-space:nowrap;">背景</div><svg style="position:absolute;left:138.0px;top:224.5px;" width="10" height="10" viewBox="0 0 10 10"><path d="M1 1L9 9M9 1L1 9" stroke="#444" stroke-width="1.2"/></svg>
<div style="position:absolute;left:1px;top:244px;width:153px;height:25px;border:1px solid #dadada;background:#fff"></div><svg style="position:absolute;left:4px;top:248px;" width="12" height="16" viewBox="0 0 12 16"><rect x="0" y="0.5" width="12" height="12.5" fill="#fba244"/><rect x="0" y="13" width="12" height="2.7" fill="#3a3a3a"/><path d="M6 2.6L7.2 5.9H10.6L7.9 7.9L8.9 11.2L6 9.2L3.1 11.2L4.1 7.9L1.4 5.9H4.8Z" fill="#fff"/></svg><div style="position:absolute;left:22px;top:248px;font-size:12px;line-height:16px;color:#000;white-space:nowrap;">箭头形状</div><svg style="position:absolute;left:138.0px;top:251.5px;" width="10" height="10" viewBox="0 0 10 10"><path d="M1 1L9 9M9 1L1 9" stroke="#444" stroke-width="1.2"/></svg>
<div style="position:absolute;left:1px;top:271px;width:153px;height:25px;border:1px solid #dadada;background:#fff"></div><svg style="position:absolute;left:4px;top:275px;" width="12" height="16" viewBox="0 0 12 16"><rect x="0" y="0.5" width="12" height="12.5" fill="#fba244"/><rect x="0" y="13" width="12" height="2.7" fill="#3a3a3a"/><path d="M6 2.6L7.2 5.9H10.6L7.9 7.9L8.9 11.2L6 9.2L3.1 11.2L4.1 7.9L1.4 5.9H4.8Z" fill="#fff"/></svg><div style="position:absolute;left:22px;top:275px;font-size:12px;line-height:16px;color:#000;white-space:nowrap;">文本框</div><svg style="position:absolute;left:138.0px;top:278.5px;" width="10" height="10" viewBox="0 0 10 10"><path d="M1 1L9 9M9 1L1 9" stroke="#444" stroke-width="1.2"/></svg>
<div style="position:absolute;left:1px;top:298px;width:153px;height:25px;border:1px solid #dadada;background:#fff"></div><svg style="position:absolute;left:4px;top:302px;" width="12" height="16" viewBox="0 0 12 16"><rect x="0" y="0.5" width="12" height="12.5" fill="#fba244"/><rect x="0" y="13" width="12" height="2.7" fill="#3a3a3a"/><path d="M6 2.6L7.2 5.9H10.6L7.9 7.9L8.9 11.2L6 9.2L3.1 11.2L4.1 7.9L1.4 5.9H4.8Z" fill="#fff"/></svg><div style="position:absolute;left:22px;top:302px;font-size:12px;line-height:16px;color:#000;white-space:nowrap;">基本绘图形状</div><svg style="position:absolute;left:138.0px;top:305.5px;" width="10" height="10" viewBox="0 0 10 10"><path d="M1 1L9 9M9 1L1 9" stroke="#444" stroke-width="1.2"/></svg>
<svg style="position:absolute;left:35px;top:324px;" width="9" height="5" viewBox="0 0 9 5"><path d="M0 0H9L4.5 5Z" fill="#3a96d8"/></svg>
<div style="position:absolute;left:137px;top:324px;width:17px;height:262px;background:#ececec"></div>
<div style="position:absolute;left:137px;top:325px;width:17px;height:18px;background:#fff;border:1px solid #c8c8c8"></div>
<svg style="position:absolute;left:140.0px;top:331.5px;" width="9" height="5.0" viewBox="0 0 9 5.0"><path d="M0 5.0H9L4.5 0Z" fill="#666"/></svg>
<div style="position:absolute;left:137px;top:380px;width:17px;height:19px;background:#fff;border:1px solid #c8c8c8"></div>
<div style="position:absolute;left:137px;top:569px;width:17px;height:17px;background:#fff;border:1px solid #c8c8c8"></div>
<svg style="position:absolute;left:140.0px;top:575.0px;" width="9" height="5.0" viewBox="0 0 9 5.0"><path d="M0 0H9L4.5 5.0Z" fill="#666"/></svg>
<div style="position:absolute;left:0;top:329px;width:137px;height:257px;overflow:hidden">
<div style="position:absolute;left:9px;top:9px;font-size:12px;line-height:16px;color:#111;white-space:nowrap;">动态多边形</div>
<svg style="position:absolute;left:14px;top:36px;" width="51" height="51" viewBox="0 0 51 51"><path d="M25.5 0L51 25.5L25.5 51L0 25.5Z" fill="#3a96d8"/><circle cx="25.5" cy="25.5" r="10.5" fill="#fff"/></svg>
<div style="position:absolute;left:4px;top:96px;font-size:12px;line-height:16px;color:#111;white-space:nowrap;">动态多边⋯</div>
<div style="position:absolute;left:2px;top:115px;width:75px;height:86px;background:#c3c3c3"></div>
<svg style="position:absolute;left:13px;top:122px;" width="53" height="53" viewBox="0 0 53 53"><path d="M26.5 1.0L32.10 18.70Q33.10 19.90 34.30 20.90L52.00 26.50L34.30 32.10Q33.10 33.10 32.10 34.30L26.50 52.00L20.90 34.30Q19.90 33.10 18.70 32.10L1.00 26.50L18.70 20.90Q19.90 19.90 20.90 18.70L26.50 1.00Z" fill="#3898de"/></svg>
<div style="position:absolute;left:15px;top:183px;font-size:12px;line-height:16px;color:#111;white-space:nowrap;">动态星形</div>
<svg style="position:absolute;left:14.5px;top:210px;" width="50" height="50" viewBox="0 0 50 50"><path d="M25 0L34 16L50 25L34 34L25 50L16 34L0 25L16 16Z" fill="#3a96d8"/><circle cx="25" cy="25" r="7.3" fill="#fff"/></svg>
</div>
<div style="position:absolute;left:1px;top:588px;width:153px;height:25px;border:1px solid #dadada;background:#fff"></div><svg style="position:absolute;left:4px;top:592px;" width="12" height="16" viewBox="0 0 12 16"><rect x="0" y="0.5" width="12" height="12.5" fill="#fba244"/><rect x="0" y="13" width="12" height="2.7" fill="#3a3a3a"/><path d="M6 2.6L7.2 5.9H10.6L7.9 7.9L8.9 11.2L6 9.2L3.1 11.2L4.1 7.9L1.4 5.9H4.8Z" fill="#fff"/></svg><div style="position:absolute;left:22px;top:592px;font-size:12px;line-height:16px;color:#000;white-space:nowrap;">常用形状</div><svg style="position:absolute;left:138.0px;top:595.5px;" width="10" height="10" viewBox="0 0 10 10"><path d="M1 1L9 9M9 1L1 9" stroke="#444" stroke-width="1.2"/></svg>
<div style="position:absolute;left:1px;top:615px;width:153px;height:25px;border:1px solid #dadada;background:#fff"></div><svg style="position:absolute;left:4px;top:619px;" width="12" height="16" viewBox="0 0 12 16"><rect x="0" y="0.5" width="12" height="12.5" fill="#fba244"/><rect x="0" y="13" width="12" height="2.7" fill="#3a3a3a"/><path d="M6 2.6L7.2 5.9H10.6L7.9 7.9L8.9 11.2L6 9.2L3.1 11.2L4.1 7.9L1.4 5.9H4.8Z" fill="#fff"/></svg><div style="position:absolute;left:22px;top:619px;font-size:12px;line-height:16px;color:#000;white-space:nowrap;">图标</div><svg style="position:absolute;left:138.0px;top:622.5px;" width="10" height="10" viewBox="0 0 10 10"><path d="M1 1L9 9M9 1L1 9" stroke="#444" stroke-width="1.2"/></svg>
<div style="position:absolute;left:1px;top:642px;width:153px;height:25px;border:1px solid #dadada;background:#fff"></div><svg style="position:absolute;left:4px;top:646px;" width="12" height="16" viewBox="0 0 12 16"><rect x="0" y="0.5" width="12" height="12.5" fill="#fba244"/><rect x="0" y="13" width="12" height="2.7" fill="#3a3a3a"/><path d="M6 2.6L7.2 5.9H10.6L7.9 7.9L8.9 11.2L6 9.2L3.1 11.2L4.1 7.9L1.4 5.9H4.8Z" fill="#fff"/></svg><div style="position:absolute;left:22px;top:646px;font-size:12px;line-height:16px;color:#000;white-space:nowrap;">2D框图</div><svg style="position:absolute;left:138.0px;top:649.5px;" width="10" height="10" viewBox="0 0 10 10"><path d="M1 1L9 9M9 1L1 9" stroke="#444" stroke-width="1.2"/></svg>
<div style="position:absolute;left:3px;top:666px;width:59px;height:25px;border:1px solid #c8c8c8;border-top:none;background:#fff"></div>
<div style="position:absolute;left:-69px;top:671.0px;width:200px;text-align:center;font-size:12px;line-height:16px;color:#111;white-space:nowrap;">符号库</div>
<div style="position:absolute;left:-3px;top:671.0px;width:200px;text-align:center;font-size:12px;line-height:16px;color:#111;white-space:nowrap;">文件恢复</div>
<div style="position:absolute;left:437px;top:165px;width:93px;height:24px;background:#c6c6c6"></div>
<svg style="position:absolute;left:167px;top:169px;" width="11" height="16" viewBox="0 0 11 16"><path d="M0.5 0.5H8L10.5 3V15.5H0.5Z" fill="#fff" stroke="#ccc"/><rect x="1" y="2" width="8" height="3.5" fill="#fba244"/><path d="M2 3.7H8" stroke="#fff" stroke-dasharray="1 1"/><path d="M1.5 7.5H5.5M3.5 7.5V12" stroke="#222" stroke-width="1.4"/><circle cx="3.5" cy="12.5" r="1.6" fill="#fba244"/><path d="M5 12.5H9.5" stroke="#555"/></svg>
<div style="position:absolute;left:184px;top:169px;font-size:12px;line-height:16px;color:#111;white-space:nowrap;">绘图1</div>
<svg style="position:absolute;left:223.0px;top:171.5px;" width="10" height="10" viewBox="0 0 10 10"><path d="M1 1L9 9M9 1L1 9" stroke="#555" stroke-width="1.1"/></svg>
<svg style="position:absolute;left:259.5px;top:169px;" width="11" height="16" viewBox="0 0 11 16"><path d="M0.5 0.5H8L10.5 3V15.5H0.5Z" fill="#fff" stroke="#ccc"/><rect x="1" y="2" width="8" height="3.5" fill="#fba244"/><path d="M2 3.7H8" stroke="#fff" stroke-dasharray="1 1"/><path d="M1.5 7.5H5.5M3.5 7.5V12" stroke="#222" stroke-width="1.4"/><circle cx="3.5" cy="12.5" r="1.6" fill="#fba244"/><path d="M5 12.5H9.5" stroke="#555"/></svg>
<div style="position:absolute;left:276.5px;top:169px;font-size:12px;line-height:16px;color:#111;white-space:nowrap;">绘图2</div>
<svg style="position:absolute;left:315.5px;top:171.5px;" width="10" height="10" viewBox="0 0 10 10"><path d="M1 1L9 9M9 1L1 9" stroke="#555" stroke-width="1.1"/></svg>
<svg style="position:absolute;left:352px;top:169px;" width="11" height="16" viewBox="0 0 11 16"><path d="M0.5 0.5H8L10.5 3V15.5H0.5Z" fill="#fff" stroke="#ccc"/><rect x="1" y="2" width="8" height="3.5" fill="#fba244"/><path d="M2 3.7H8" stroke="#fff" stroke-dasharray="1 1"/><path d="M1.5 7.5H5.5M3.5 7.5V12" stroke="#222" stroke-width="1.4"/><circle cx="3.5" cy="12.5" r="1.6" fill="#fba244"/><path d="M5 12.5H9.5" stroke="#555"/></svg>
<div style="position:absolute;left:369px;top:169px;font-size:12px;line-height:16px;color:#111;white-space:nowrap;">绘图3</div>
<svg style="position:absolute;left:408.0px;top:171.5px;" width="10" height="10" viewBox="0 0 10 10"><path d="M1 1L9 9M9 1L1 9" stroke="#555" stroke-width="1.1"/></svg>
<svg style="position:absolute;left:445px;top:169px;" width="11" height="16" viewBox="0 0 11 16"><path d="M0.5 0.5H8L10.5 3V15.5H0.5Z" fill="#fff" stroke="#ccc"/><rect x="1" y="2" width="8" height="3.5" fill="#fba244"/><path d="M2 3.7H8" stroke="#fff" stroke-dasharray="1 1"/><path d="M1.5 7.5H5.5M3.5 7.5V12" stroke="#222" stroke-width="1.4"/><circle cx="3.5" cy="12.5" r="1.6" fill="#fba244"/><path d="M5 12.5H9.5" stroke="#555"/></svg>
<div style="position:absolute;left:462px;top:169px;font-size:12px;line-height:16px;color:#111;white-space:nowrap;">绘图4</div>
<svg style="position:absolute;left:501.0px;top:171.5px;" width="10" height="10" viewBox="0 0 10 10"><path d="M1 1L9 9M9 1L1 9" stroke="#555" stroke-width="1.1"/></svg>
<div style="position:absolute;left:158px;top:189px;width:393px;height:18px;border-top:1px solid #dcdcdc;border-bottom:1px solid #d4d4d4;background:#fff"></div>
<div style="position:absolute;left:158px;top:189px;width:18px;height:18px;background:#ececec;border-right:1px solid #d4d4d4;border-bottom:1px solid #d4d4d4"></div>
<div style="position:absolute;left:158px;top:206px;width:18px;height:433px;border-left:1px solid #d4d4d4;border-right:1px solid #d4d4d4;background:#fff"></div>
<div style="position:absolute;left:180px;top:190px;width:1px;height:16px;background:#d4d4d4"></div>
<div style="position:absolute;left:182px;top:190px;font-size:10px;line-height:14px;color:#666;white-space:nowrap;line-height:11px">100</div>
<div style="position:absolute;left:199px;top:199px;width:1px;height:7px;background:#d4d4d4"></div>
<div style="position:absolute;left:218px;top:190px;width:1px;height:16px;background:#d4d4d4"></div>
<div style="position:absolute;left:220px;top:190px;font-size:10px;line-height:14px;color:#666;white-space:nowrap;line-height:11px">110</div>
<div style="position:absolute;left:237px;top:199px;width:1px;height:7px;background:#d4d4d4"></div>
<div style="position:absolute;left:256px;top:190px;width:1px;height:16px;background:#d4d4d4"></div>
<div style="position:absolute;left:258px;top:190px;font-size:10px;line-height:14px;color:#666;white-space:nowrap;line-height:11px">120</div>
<div style="position:absolute;left:275px;top:199px;width:1px;height:7px;background:#d4d4d4"></div>
<div style="position:absolute;left:293px;top:190px;width:1px;height:16px;background:#d4d4d4"></div>
<div style="position:absolute;left:295px;top:190px;font-size:10px;line-height:14px;color:#666;white-space:nowrap;line-height:11px">130</div>
<div style="position:absolute;left:312px;top:199px;width:1px;height:7px;background:#d4d4d4"></div>
<div style="position:absolute;left:331px;top:190px;width:1px;height:16px;background:#d4d4d4"></div>
<div style="position:absolute;left:333px;top:190px;font-size:10px;line-height:14px;color:#666;white-space:nowrap;line-height:11px">140</div>
<div style="position:absolute;left:350px;top:199px;width:1px;height:7px;background:#d4d4d4"></div>
<div style="position:absolute;left:369px;top:190px;width:1px;height:16px;background:#d4d4d4"></div>
<div style="position:absolute;left:371px;top:190px;font-size:10px;line-height:14px;color:#666;white-space:nowrap;line-height:11px">150</div>
<div style="position:absolute;left:388px;top:199px;width:1px;height:7px;background:#d4d4d4"></div>
<div style="position:absolute;left:407px;top:190px;width:1px;height:16px;background:#d4d4d4"></div>
<div style="position:absolute;left:409px;top:190px;font-size:10px;line-height:14px;color:#666;white-space:nowrap;line-height:11px">160</div>
<div style="position:absolute;left:426px;top:199px;width:1px;height:7px;background:#d4d4d4"></div>
<div style="position:absolute;left:445px;top:190px;width:1px;height:16px;background:#d4d4d4"></div>
<div style="position:absolute;left:447px;top:190px;font-size:10px;line-height:14px;color:#666;white-space:nowrap;line-height:11px">170</div>
<div style="position:absolute;left:464px;top:199px;width:1px;height:7px;background:#d4d4d4"></div>
<div style="position:absolute;left:482px;top:190px;width:1px;height:16px;background:#d4d4d4"></div>
<div style="position:absolute;left:484px;top:190px;font-size:10px;line-height:14px;color:#666;white-space:nowrap;line-height:11px">180</div>
<div style="position:absolute;left:501px;top:199px;width:1px;height:7px;background:#d4d4d4"></div>
<div style="position:absolute;left:520px;top:190px;width:1px;height:16px;background:#d4d4d4"></div>
<div style="position:absolute;left:522px;top:190px;font-size:10px;line-height:14px;color:#666;white-space:nowrap;line-height:11px">190</div>
<div style="position:absolute;left:539px;top:199px;width:1px;height:7px;background:#d4d4d4"></div>
<div style="position:absolute;left:159px;top:214px;width:16px;height:1px;background:#d4d4d4"></div>
<div style="position:absolute;left:168px;top:233px;width:7px;height:1px;background:#d4d4d4"></div>
<div style="position:absolute;left:158px;top:215px;width:12px;height:30px;overflow:hidden"><div style="position:absolute;left:1px;top:1px;writing-mode:vertical-rl;transform:rotate(180deg);font-size:10px;line-height:11px;color:#666">50</div></div>
<div style="position:absolute;left:159px;top:252px;width:16px;height:1px;background:#d4d4d4"></div>
<div style="position:absolute;left:168px;top:271px;width:7px;height:1px;background:#d4d4d4"></div>
<div style="position:absolute;left:158px;top:253px;width:12px;height:30px;overflow:hidden"><div style="position:absolute;left:1px;top:1px;writing-mode:vertical-rl;transform:rotate(180deg);font-size:10px;line-height:11px;color:#666">60</div></div>
<div style="position:absolute;left:159px;top:290px;width:16px;height:1px;background:#d4d4d4"></div>
<div style="position:absolute;left:168px;top:309px;width:7px;height:1px;background:#d4d4d4"></div>
<div style="position:absolute;left:158px;top:291px;width:12px;height:30px;overflow:hidden"><div style="position:absolute;left:1px;top:1px;writing-mode:vertical-rl;transform:rotate(180deg);font-size:10px;line-height:11px;color:#666">70</div></div>
<div style="position:absolute;left:159px;top:327px;width:16px;height:1px;background:#d4d4d4"></div>
<div style="position:absolute;left:168px;top:346px;width:7px;height:1px;background:#d4d4d4"></div>
<div style="position:absolute;left:158px;top:328px;width:12px;height:30px;overflow:hidden"><div style="position:absolute;left:1px;top:1px;writing-mode:vertical-rl;transform:rotate(180deg);font-size:10px;line-height:11px;color:#666">80</div></div>
<div style="position:absolute;left:159px;top:365px;width:16px;height:1px;background:#d4d4d4"></div>
<div style="position:absolute;left:168px;top:384px;width:7px;height:1px;background:#d4d4d4"></div>
<div style="position:absolute;left:158px;top:366px;width:12px;height:30px;overflow:hidden"><div style="position:absolute;left:1px;top:1px;writing-mode:vertical-rl;transform:rotate(180deg);font-size:10px;line-height:11px;color:#666">90</div></div>
<div style="position:absolute;left:159px;top:403px;width:16px;height:1px;background:#d4d4d4"></div>
<div style="position:absolute;left:168px;top:422px;width:7px;height:1px;background:#d4d4d4"></div>
<div style="position:absolute;left:158px;top:404px;width:12px;height:30px;overflow:hidden"><div style="position:absolute;left:1px;top:1px;writing-mode:vertical-rl;transform:rotate(180deg);font-size:10px;line-height:11px;color:#666">100</div></div>
<div style="position:absolute;left:159px;top:441px;width:16px;height:1px;background:#d4d4d4"></div>
<div style="position:absolute;left:168px;top:460px;width:7px;height:1px;background:#d4d4d4"></div>
<div style="position:absolute;left:158px;top:442px;width:12px;height:30px;overflow:hidden"><div style="position:absolute;left:1px;top:1px;writing-mode:vertical-rl;transform:rotate(180deg);font-size:10px;line-height:11px;color:#666">110</div></div>
<div style="position:absolute;left:159px;top:479px;width:16px;height:1px;background:#d4d4d4"></div>
<div style="position:absolute;left:168px;top:498px;width:7px;height:1px;background:#d4d4d4"></div>
<div style="position:absolute;left:158px;top:480px;width:12px;height:30px;overflow:hidden"><div style="position:absolute;left:1px;top:1px;writing-mode:vertical-rl;transform:rotate(180deg);font-size:10px;line-height:11px;color:#666">120</div></div>
<div style="position:absolute;left:159px;top:516px;width:16px;height:1px;background:#d4d4d4"></div>
<div style="position:absolute;left:168px;top:535px;width:7px;height:1px;background:#d4d4d4"></div>
<div style="position:absolute;left:158px;top:517px;width:12px;height:30px;overflow:hidden"><div style="position:absolute;left:1px;top:1px;writing-mode:vertical-rl;transform:rotate(180deg);font-size:10px;line-height:11px;color:#666">130</div></div>
<div style="position:absolute;left:159px;top:554px;width:16px;height:1px;background:#d4d4d4"></div>
<div style="position:absolute;left:168px;top:573px;width:7px;height:1px;background:#d4d4d4"></div>
<div style="position:absolute;left:158px;top:555px;width:12px;height:30px;overflow:hidden"><div style="position:absolute;left:1px;top:1px;writing-mode:vertical-rl;transform:rotate(180deg);font-size:10px;line-height:11px;color:#666">140</div></div>
<div style="position:absolute;left:159px;top:592px;width:16px;height:1px;background:#d4d4d4"></div>
<div style="position:absolute;left:168px;top:611px;width:7px;height:1px;background:#d4d4d4"></div>
<div style="position:absolute;left:158px;top:593px;width:12px;height:30px;overflow:hidden"><div style="position:absolute;left:1px;top:1px;writing-mode:vertical-rl;transform:rotate(180deg);font-size:10px;line-height:11px;color:#666">150</div></div>
<div style="position:absolute;left:159px;top:630px;width:16px;height:1px;background:#d4d4d4"></div>
<div style="position:absolute;left:158px;top:631px;width:12px;height:30px;overflow:hidden"><div style="position:absolute;left:1px;top:1px;writing-mode:vertical-rl;transform:rotate(180deg);font-size:10px;line-height:11px;color:#666">160</div></div>
<svg style="position:absolute;left:280px;top:330px;" width="145" height="150" viewBox="0 0 145 150"><path d="M87.5 4.8L84.7 59L137.9 73.5L84.7 87.5L87.5 142.2L58.4 97.3L6.9 115.6L41.1 73.5L6.9 30.9L58.4 49.7Z" fill="#3a96d8"/></svg>
<div style="position:absolute;left:551px;top:189px;width:17px;height:450px;background:#ececec"></div>
<div style="position:absolute;left:551px;top:189px;width:17px;height:18px;background:#fff;border:1px solid #c8c8c8"></div>
<svg style="position:absolute;left:554.0px;top:195.5px;" width="9" height="5.0" viewBox="0 0 9 5.0"><path d="M0 5.0H9L4.5 0Z" fill="#666"/></svg>
<div style="position:absolute;left:551px;top:333px;width:17px;height:157px;background:#fff;border:1px solid #c4c4c4"></div>
<div style="position:absolute;left:551px;top:622px;width:17px;height:17px;background:#fff;border:1px solid #c8c8c8"></div>
<svg style="position:absolute;left:554.0px;top:628.0px;" width="9" height="5.0" viewBox="0 0 9 5.0"><path d="M0 0H9L4.5 5.0Z" fill="#666"/></svg>
<div style="position:absolute;left:158px;top:639px;width:410px;height:17px;background:#ececec"></div>
<div style="position:absolute;left:158px;top:639px;width:18px;height:17px;background:#fff;border:1px solid #c8c8c8"></div>
<svg style="position:absolute;left:164px;top:642px;" width="5" height="9" viewBox="0 0 5 9"><path d="M5 0V9L0 4.5Z" fill="#666"/></svg>
<div style="position:absolute;left:306px;top:639px;width:93px;height:17px;background:#fff;border:1px solid #c4c4c4"></div>
<div style="position:absolute;left:534px;top:639px;width:17px;height:17px;background:#fff;border:1px solid #c8c8c8"></div>
<svg style="position:absolute;left:539px;top:642px;" width="5" height="9" viewBox="0 0 5 9"><path d="M0 0V9L5 4.5Z" fill="#666"/></svg>
<svg style="position:absolute;left:164px;top:663px;" width="12" height="8" viewBox="0 0 12 8"><path d="M1 7L6 2L11 7" stroke="#333" stroke-width="2" fill="none"/></svg>
<div style="position:absolute;left:184px;top:661px;width:1px;height:12px;background:#999"></div>
<div style="position:absolute;left:187px;top:659px;font-size:12px;line-height:16px;color:#111;white-space:nowrap;">页-1</div>
<svg style="position:absolute;left:294.5px;top:665.25px;" width="6" height="3.5" viewBox="0 0 6 3.5"><path d="M0 0H6L3.0 3.5Z" fill="#777"/></svg>
<div style="position:absolute;left:307px;top:661px;width:1px;height:12px;background:#999"></div>
<svg style="position:absolute;left:316px;top:661px;" width="12" height="12" viewBox="0 0 12 12"><path d="M6 0V12M0 6H12" stroke="#333" stroke-width="2"/></svg>
<div style="position:absolute;left:336px;top:661px;width:1px;height:12px;background:#999"></div>
<div style="position:absolute;left:352px;top:659px;font-size:12px;line-height:16px;color:#f5a030;white-space:nowrap;-webkit-text-stroke:0.25px #f5a030">页-1</div>
<div style="position:absolute;left:159px;top:677px;font-size:12px;line-height:16px;color:#222;white-space:nowrap;line-height:16px">填充</div>
<div style="position:absolute;left:185px;top:678px;height:13px;display:flex"><div style="width:3px;height:13px;margin-right:1px;background:#c00000"></div><div style="width:3px;height:13px;margin-right:1px;background:#e0141e"></div><div style="width:3px;height:13px;margin-right:1px;background:#c84060"></div><div style="width:3px;height:13px;margin-right:1px;background:#e04060"></div><div style="width:3px;height:13px;margin-right:1px;background:#e86070"></div><div style="width:3px;height:13px;margin-right:1px;background:#e0609a"></div><div style="width:3px;height:13px;margin-right:1px;background:#e890a8"></div><div style="width:3px;height:13px;margin-right:1px;background:#e88080"></div><div style="width:3px;height:13px;margin-right:1px;background:#f0a090"></div><div style="width:3px;height:13px;margin-right:1px;background:#f5a878"></div><div style="width:3px;height:13px;margin-right:1px;background:#f5b8a8"></div><div style="width:3px;height:13px;margin-right:1px;background:#f5c8c8"></div><div style="width:3px;height:13px;margin-right:1px;background:#e8d8e8"></div><div style="width:3px;height:13px;margin-right:1px;background:#fad0e0"></div><div style="width:3px;height:13px;margin-right:1px;background:#fde6ee"></div><div style="width:3px;height:13px;margin-right:1px;background:#0a2050"></div><div style="width:3px;height:13px;margin-right:1px;background:#1a2a70"></div><div style="width:3px;height:13px;margin-right:1px;background:#3a2a80"></div><div style="width:3px;height:13px;margin-right:1px;background:#104090"></div><div style="width:3px;height:13px;margin-right:1px;background:#0a50a0"></div><div style="width:3px;height:13px;margin-right:1px;background:#4060b0"></div><div style="width:3px;height:13px;margin-right:1px;background:#4a80c0"></div><div style="width:3px;height:13px;margin-right:1px;background:#0a78c8"></div><div style="width:3px;height:13px;margin-right:1px;background:#2090d8"></div><div style="width:3px;height:13px;margin-right:1px;background:#30a8e0"></div><div style="width:3px;height:13px;margin-right:1px;background:#40b8e8"></div><div style="width:3px;height:13px;margin-right:1px;background:#30c8f0"></div><div style="width:3px;height:13px;margin-right:1px;background:#80c0f0"></div><div style="width:3px;height:13px;margin-right:1px;background:#a8d8f0"></div><div style="width:3px;height:13px;margin-right:1px;background:#d0e8f8"></div><div style="width:3px;height:13px;margin-right:1px;background:#0a3a28"></div><div style="width:3px;height:13px;margin-right:1px;background:#0a5028"></div><div style="width:3px;height:13px;margin-right:1px;background:#0a5a50"></div><div style="width:3px;height:13px;margin-right:1px;background:#506028"></div><div style="width:3px;height:13px;margin-right:1px;background:#0a7040"></div><div style="width:3px;height:13px;margin-right:1px;background:#189040"></div><div style="width:3px;height:13px;margin-right:1px;background:#10a090"></div><div style="width:3px;height:13px;margin-right:1px;background:#40b0b0"></div><div style="width:3px;height:13px;margin-right:1px;background:#20c8b0"></div><div style="width:3px;height:13px;margin-right:1px;background:#40b080"></div><div style="width:3px;height:13px;margin-right:1px;background:#10b050"></div><div style="width:3px;height:13px;margin-right:1px;background:#80b010"></div><div style="width:3px;height:13px;margin-right:1px;background:#a0c860"></div><div style="width:3px;height:13px;margin-right:1px;background:#c0d840"></div><div style="width:3px;height:13px;margin-right:1px;background:#c8e8c8"></div><div style="width:3px;height:13px;margin-right:1px;background:#e04010"></div><div style="width:3px;height:13px;margin-right:1px;background:#f06000"></div><div style="width:3px;height:13px;margin-right:1px;background:#f08000"></div><div style="width:3px;height:13px;margin-right:1px;background:#f09848"></div><div style="width:3px;height:13px;margin-right:1px;background:#f0a010"></div><div style="width:3px;height:13px;margin-right:1px;background:#f8b000"></div><div style="width:3px;height:13px;margin-right:1px;background:#f8c030"></div><div style="width:3px;height:13px;margin-right:1px;background:#f8d020"></div><div style="width:3px;height:13px;margin-right:1px;background:#f8e000"></div><div style="width:3px;height:13px;margin-right:1px;background:#f8e880"></div><div style="width:3px;height:13px;margin-right:1px;background:#f0c890"></div><div style="width:3px;height:13px;margin-right:1px;background:#f8d8a0"></div><div style="width:3px;height:13px;margin-right:1px;background:#fce0c0"></div><div style="width:3px;height:13px;margin-right:1px;background:#fce8d8"></div><div style="width:3px;height:13px;margin-right:1px;background:#fdf0e8"></div><div style="width:3px;height:13px;margin-right:1px;background:#6a2a70"></div><div style="width:3px;height:13px;margin-right:1px;background:#802a80"></div><div style="width:3px;height:13px;margin-right:1px;background:#6a3a98"></div><div style="width:3px;height:13px;margin-right:1px;background:#8050a0"></div><div style="width:3px;height:13px;margin-right:1px;background:#9a6aa8"></div><div style="width:3px;height:13px;margin-right:1px;background:#b070b0"></div><div style="width:3px;height:13px;margin-right:1px;background:#c890c8"></div><div style="width:3px;height:13px;margin-right:1px;background:#b0a0d0"></div><div style="width:3px;height:13px;margin-right:1px;background:#d0b0d8"></div><div style="width:3px;height:13px;margin-right:1px;background:#f0d0e8"></div><div style="width:3px;height:13px;margin-right:1px;background:#502010"></div><div style="width:3px;height:13px;margin-right:1px;background:#6a2a20"></div><div style="width:3px;height:13px;margin-right:1px;background:#803020"></div><div style="width:3px;height:13px;margin-right:1px;background:#a04020"></div><div style="width:3px;height:13px;margin-right:1px;background:#b06030"></div><div style="width:3px;height:13px;margin-right:1px;background:#c08060"></div><div style="width:3px;height:13px;margin-right:1px;background:#d0a080"></div><div style="width:3px;height:13px;margin-right:1px;background:#e0c8b0"></div><div style="width:3px;height:13px;margin-right:1px;background:#d0d8d0"></div><div style="width:3px;height:13px;margin-right:1px;background:#000000"></div><div style="width:3px;height:13px;margin-right:1px;background:#303030"></div><div style="width:3px;height:13px;margin-right:1px;background:#505050"></div><div style="width:3px;height:13px;margin-right:1px;background:#707070"></div><div style="width:3px;height:13px;margin-right:1px;background:#888888"></div><div style="width:3px;height:13px;margin-right:1px;background:#a0a0a0"></div><div style="width:3px;height:13px;margin-right:1px;background:#b0b0b0"></div><div style="width:3px;height:13px;margin-right:1px;background:#c8c8c8"></div><div style="width:3px;height:13px;margin-right:1px;background:#d8d8d8"></div><div style="width:3px;height:13px;margin-right:1px;background:#e8e8e8"></div></div>
<div style="position:absolute;left:577px;top:168px;font-size:15px;line-height:19px;color:#333;white-space:nowrap;">填充</div>
<svg style="position:absolute;left:901.0px;top:172.5px;" width="12" height="12" viewBox="0 0 12 12"><path d="M1 1L11 11M11 1L1 11" stroke="#444" stroke-width="1.3"/></svg>
<div style="position:absolute;left:603px;top:189px;width:1px;height:502px;background:#d8d8d8"></div>
<div style="position:absolute;left:572px;top:190px;width:30px;height:30px;background:#c6c6c6"></div>
<svg style="position:absolute;left:577px;top:196px;" width="22" height="21" viewBox="0 0 22 21"><path d="M13 5C17 3 21.5 5 21 9C21 12 19 12 18.5 14.5C18 16.5 15 16.5 15 13.5L12.5 11Z" fill="#fba244"/><path d="M8.5 1.8L15.5 8.5L8.5 15.2L1.5 8.5Z" fill="#eee" stroke="#333" stroke-width="1.3"/><path d="M8.5 8V3A1.8 1.8 0 0 1 12 2.5" stroke="#555" stroke-width="1.2" fill="none"/><rect x="1" y="16" width="20" height="3.7" fill="#444"/></svg>
<svg style="position:absolute;left:576px;top:236px;" width="22" height="20" viewBox="0 0 22 20"><path d="M12.8 2.4C9 1 5.5 1.5 4 3.5C2.5 6 4 7.5 7.6 9.6L4 13.8" stroke="#444" stroke-width="1" fill="none"/><path d="M19.8 3L11.5 11.5" stroke="#fba244" stroke-width="4.2"/><path d="M9.5 11L12 13.5L9.5 14.5Z" fill="#444"/><rect x="1.1" y="14.8" width="19.8" height="3.9" fill="#444"/></svg>
<div style="position:absolute;left:577px;top:275px;width:20px;height:20px;background:#fba244;border:1px solid #e88a20"></div>
<svg style="position:absolute;left:577px;top:317px;" width="20" height="18" viewBox="0 0 20 18"><rect x="0.5" y="0.5" width="19" height="17" fill="#fff" stroke="#555"/><path d="M0 17V11L5 7L11 12L15 10L20 13V18H0Z" fill="#3d3d3d"/><circle cx="14.5" cy="5" r="2.5" fill="#fba244"/></svg>
<svg style="position:absolute;left:578px;top:355px;" width="19" height="20" viewBox="0 0 19 20"><rect x="0" y="0" width="15.5" height="16" fill="#3d3d3d"/><rect x="3" y="3.5" width="16" height="16.3" fill="#fba244"/></svg>
<svg style="position:absolute;left:579px;top:395px;" width="16" height="20" viewBox="0 0 16 20"><path d="M0.6 0.6H10.5L15.4 5.5V19.4H0.6Z" fill="#fff" stroke="#333" stroke-width="1.2"/><path d="M10 0.6V6H15.4Z" fill="#333"/><g fill="#fba244"><rect x="3" y="7" width="2" height="2"/><rect x="3" y="11" width="2" height="2"/><rect x="3" y="15" width="2" height="2"/></g><path d="M7 8H13M7 12H13M7 16H13" stroke="#fba244" stroke-width="1.7"/></svg>
<svg style="position:absolute;left:577px;top:434px;" width="20" height="22" viewBox="0 0 20 22"><circle cx="9.5" cy="7.8" r="7" fill="#fff" stroke="#5a5a5a" stroke-width="1.2"/><path d="M3 3.5C5 1 9 0.5 11 1.2L10.5 3.5C9 4 9 5.5 10 6C9 7 7 6.5 6.5 8.5C7.5 10 8.5 11 9.5 13L9.5 15.5C8 15.5 7 15 6.5 14.8C6 12 5 10.5 3.5 9.5C2.5 9 2 8 2.1 6Z" fill="#5a5a5a"/><path d="M13 2.5C16 4.5 17.5 8 16.5 11.5C15.5 10.5 14.5 9.5 14 8C13.5 6.5 14.5 5 13 2.5Z" fill="#5a5a5a"/><path d="M2.3 16.3H18.7V20.3H2.3Z M9.5 16.3V20.3" fill="#fff" stroke="#fba244" stroke-width="1.6"/><path d="M0 17.2V19.4M21 17.2V19.4" stroke="#fba244" stroke-width="2"/></svg>
<svg style="position:absolute;left:579px;top:475px;" width="16" height="20" viewBox="0 0 16 20"><path d="M0.6 0.6H10.5L15.4 5.5V19.4H0.6Z" fill="#fff" stroke="#333" stroke-width="1.2"/><path d="M10 0.6V6H15.4Z" fill="#333"/><path d="M2.5 3.5H8.5M2.5 6.2H12" stroke="#ccc" stroke-width="1.2"/><path d="M4.5 17L11 10.5C12.5 9 14 10.5 12.5 12L6.5 18C5.5 19 4 17.5 5 16.5L10.5 11" stroke="#fba244" stroke-width="1.2" fill="none"/></svg>
<svg style="position:absolute;left:577px;top:515px;" width="20" height="20" viewBox="0 0 20 20"><path d="M0.6 1.6H19.4V15.2H7.5L4.2 18.5V15.2H0.6Z" fill="#fff" stroke="#333" stroke-width="1.2" stroke-linejoin="round"/><circle cx="4.2" cy="8" r="1.9" fill="#fba244"/><circle cx="10" cy="8" r="1.9" fill="#fba244"/><circle cx="15.8" cy="8" r="1.9" fill="#fba244"/></svg>
<svg style="position:absolute;left:576px;top:554px;" width="22" height="22" viewBox="0 0 22 22"><circle cx="10.8" cy="10.7" r="9.4" fill="#fff" stroke="#333" stroke-width="1.2"/><path d="M7.5 8C7.5 4.5 14 4.5 14 8C14 10.5 10.8 10.5 10.8 13" stroke="#fba244" stroke-width="2.4" fill="none"/><circle cx="10.8" cy="16.3" r="1.5" fill="#fba244"/></svg>
<div style="position:absolute;left:610px;top:196px;width:289px;height:170px;border:1px solid #e8e8e8"></div>
<svg style="position:absolute;left:619px;top:209.1px;" width="13" height="13" viewBox="0 0 13 13"><circle cx="6.5" cy="6.5" r="5.8" fill="#fff" stroke="#ececec"/></svg>
<div style="position:absolute;left:636px;top:207.6px;font-size:12px;line-height:16px;color:#9a9a9a;white-space:nowrap;">无填充</div>
<svg style="position:absolute;left:619px;top:235.14px;" width="13" height="13" viewBox="0 0 13 13"><circle cx="6.5" cy="6.5" r="5.8" fill="#fff" stroke="#ececec"/><circle cx="6.5" cy="6.5" r="2" fill="#b8b8b8"/></svg>
<div style="position:absolute;left:636px;top:233.64px;font-size:12px;line-height:16px;color:#9a9a9a;white-space:nowrap;">单色填充</div>
<svg style="position:absolute;left:619px;top:261.18px;" width="13" height="13" viewBox="0 0 13 13"><circle cx="6.5" cy="6.5" r="5.8" fill="#fff" stroke="#ececec"/></svg>
<div style="position:absolute;left:636px;top:259.68px;font-size:12px;line-height:16px;color:#9a9a9a;white-space:nowrap;">渐变填充</div>
<svg style="position:absolute;left:619px;top:287.22px;" width="13" height="13" viewBox="0 0 13 13"><circle cx="6.5" cy="6.5" r="5.8" fill="#fff" stroke="#ececec"/></svg>
<div style="position:absolute;left:636px;top:285.72px;font-size:12px;line-height:16px;color:#9a9a9a;white-space:nowrap;">单色渐变填充</div>
<svg style="position:absolute;left:619px;top:313.26px;" width="13" height="13" viewBox="0 0 13 13"><circle cx="6.5" cy="6.5" r="5.8" fill="#fff" stroke="#ececec"/></svg>
<div style="position:absolute;left:636px;top:311.76px;font-size:12px;line-height:16px;color:#9a9a9a;white-space:nowrap;">图案填充</div>
<svg style="position:absolute;left:619px;top:339.29999999999995px;" width="13" height="13" viewBox="0 0 13 13"><circle cx="6.5" cy="6.5" r="5.8" fill="#fff" stroke="#ececec"/></svg>
<div style="position:absolute;left:636px;top:337.79999999999995px;font-size:12px;line-height:16px;color:#9a9a9a;white-space:nowrap;">图片或纹理填充</div>
<div style="position:absolute;left:619px;top:385px;font-size:12px;line-height:16px;color:#777;white-space:nowrap;">颜色：</div>
<div style="position:absolute;left:619px;top:419px;font-size:12px;line-height:16px;color:#777;white-space:nowrap;">亮度：</div>
<div style="position:absolute;left:619px;top:452px;font-size:12px;line-height:16px;color:#777;white-space:nowrap;">透明度：</div>
<div style="position:absolute;left:836px;top:381px;width:64px;height:23px;border:1px solid #cfcfcf"></div>
<div style="position:absolute;left:842px;top:386px;width:47px;height:13px;background:#dcdcdc"></div>
<svg style="position:absolute;left:890.5px;top:391.0px;" width="5" height="3.0" viewBox="0 0 5 3.0"><path d="M0 0H5L2.5 3.0Z" fill="#bbb"/></svg>
<div style="position:absolute;left:678px;top:426px;width:74px;height:1px;background:#555"></div>
<div style="position:absolute;left:752px;top:426px;width:73px;height:1px;background:#ccc"></div>
<svg style="position:absolute;left:747px;top:422px;" width="9" height="9" viewBox="0 0 9 9"><circle cx="4.5" cy="4.5" r="4.3" fill="#8eacf6"/></svg>
<div style="position:absolute;left:678px;top:460px;width:147px;height:1px;background:#ccc"></div>
<svg style="position:absolute;left:677px;top:456px;" width="9" height="9" viewBox="0 0 9 9"><circle cx="4.5" cy="4.5" r="4.3" fill="#8eacf6"/></svg>
<div style="position:absolute;left:836px;top:415px;width:64px;height:23px;border:1px solid #cfcfcf"></div>
<div style="position:absolute;left:839px;top:418px;font-size:13px;line-height:17px;color:#666;white-space:nowrap;">0 %</div>
<svg style="position:absolute;left:887.5px;top:419.75px;" width="6" height="3.5" viewBox="0 0 6 3.5"><path d="M0 3.5H6L3.0 0Z" fill="#666"/></svg>
<svg style="position:absolute;left:887.5px;top:428.75px;" width="6" height="3.5" viewBox="0 0 6 3.5"><path d="M0 0H6L3.0 3.5Z" fill="#666"/></svg>
<div style="position:absolute;left:836px;top:449px;width:64px;height:23px;border:1px solid #cfcfcf"></div>
<div style="position:absolute;left:839px;top:452px;font-size:13px;line-height:17px;color:#666;white-space:nowrap;">0 %</div>
<svg style="position:absolute;left:887.5px;top:453.75px;" width="6" height="3.5" viewBox="0 0 6 3.5"><path d="M0 3.5H6L3.0 0Z" fill="#666"/></svg>
<svg style="position:absolute;left:887.5px;top:462.75px;" width="6" height="3.5" viewBox="0 0 6 3.5"><path d="M0 0H6L3.0 3.5Z" fill="#666"/></svg>
<div style="position:absolute;left:903px;top:207px;width:17px;height:461px;border:1px solid #c8c8c8;background:#fff"></div>
<div style="position:absolute;left:903px;top:190px;width:17px;height:18px;border:1px solid #c8c8c8;background:#fff"></div>
<svg style="position:absolute;left:906.5px;top:196.0px;" width="9" height="5.0" viewBox="0 0 9 5.0"><path d="M0 5.0H9L4.5 0Z" fill="#666"/></svg>
<div style="position:absolute;left:903px;top:668px;width:17px;height:8px;background:#ececec"></div>
<div style="position:absolute;left:903px;top:675px;width:17px;height:17px;border:1px solid #c8c8c8;background:#fff"></div>
<svg style="position:absolute;left:906.5px;top:681.0px;" width="9" height="5.0" viewBox="0 0 9 5.0"><path d="M0 0H9L4.5 5.0Z" fill="#666"/></svg>
<div style="position:absolute;left:923px;top:0px;width:2px;height:694px;background:#e8e8e8"></div>
</body></html>
